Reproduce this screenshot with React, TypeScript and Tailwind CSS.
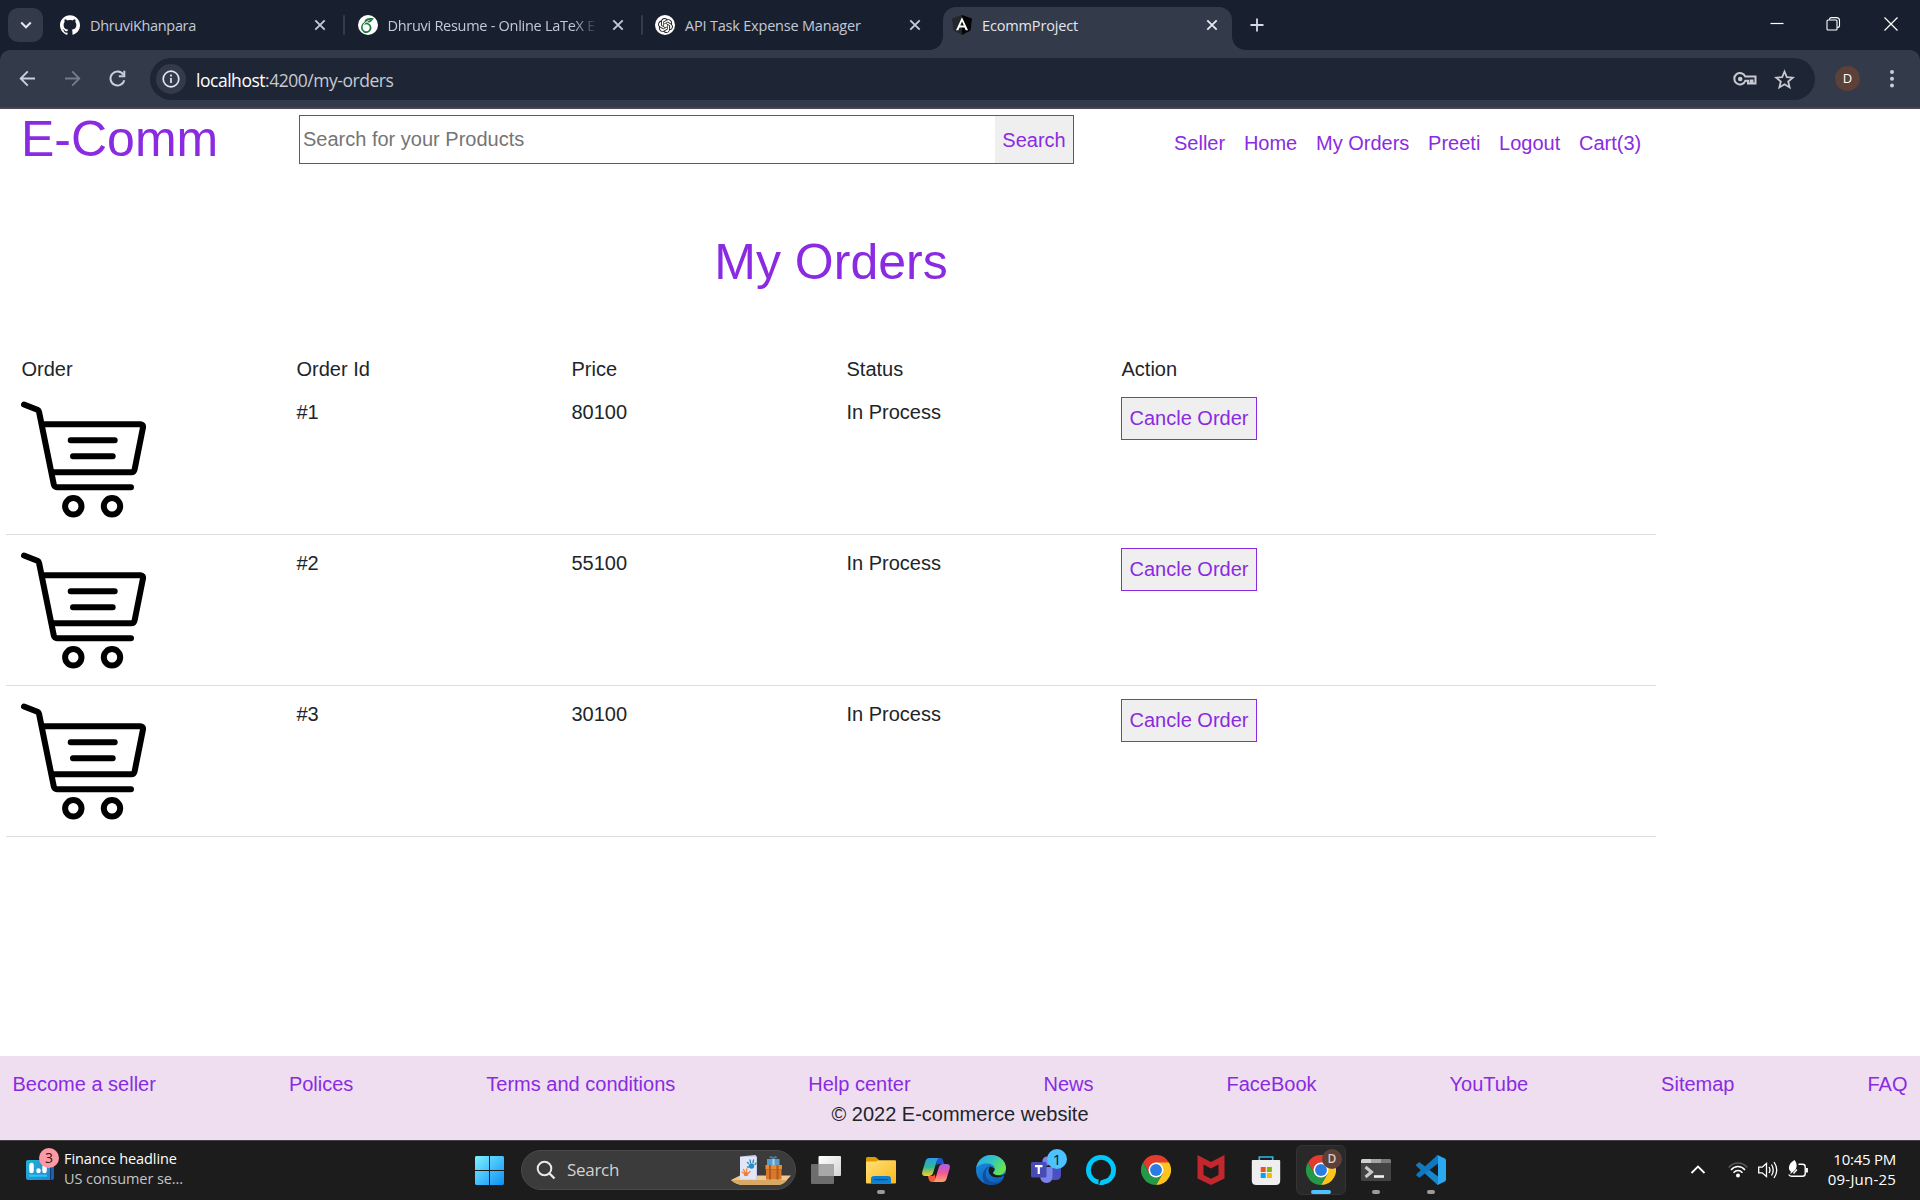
import { type ReactNode } from "react";
import { SiGithub, SiOpenai, SiOverleaf } from "react-icons/si";

const UI = "font-['Open_Sans','Noto_Sans',sans-serif]";

function CloseX({ className = "text-[#c3c9d6]" }: { className?: string }) {
  return (
    <svg className={"size-5 shrink-0 " + className} viewBox="0 0 20 20" fill="none" stroke="currentColor" strokeWidth="1.9">
      <path d="M5.3 5.3l9.4 9.4M14.7 5.3l-9.4 9.4" />
    </svg>
  );
}

function AngularShield() {
  return (
    <svg className="size-5 shrink-0" viewBox="0 0 20 20">
      <path d="M10 0L0 3.4l1.5 12L10 20z" fill="#23272b" />
      <path d="M10 0l10 3.4-1.5 12L10 20z" fill="#030405" />
      <path d="M10 2.2L4 15.3h2.300l1.200-2.900h5l1.200 2.900h2.300zM10 6.400l1.800 4.200H8.200z" fill="#fff" fillRule="evenodd" />
    </svg>
  );
}

type TabProps = { icon: ReactNode; title: string; titleClass?: string };

function Tab({ icon, title, titleClass = "" }: TabProps) {
  return (
    <div className="flex h-9 w-[297.5px] shrink-0 items-center">
      {icon}
      <div className={"ml-[10px] w-[210px] whitespace-nowrap pt-px text-[14.5px] leading-5 text-[#c3c9d6] " + titleClass}>
        {title}
      </div>
      <div className="ml-[10px] flex">
        <CloseX />
      </div>
      <div className="ml-[13px] h-5 w-[2px] rounded bg-[#343b4c]" />
    </div>
  );
}

function TabStrip() {
  return (
    <div className="flex h-[50px] shrink-0 bg-[#18202f]">
      <div className="mt-2 flex h-[34px] w-[35px] ml-2 items-center justify-center rounded-[10px] bg-[#333a4a]">
        <svg className="size-5" viewBox="0 0 20 20" fill="none" stroke="#e3e6ee" strokeWidth="2">
          <path d="M5.2 7.5l4.8 4.8 4.8-4.8" />
        </svg>
      </div>
      <div className="ml-[17px] flex w-[883px] overflow-hidden pt-[7px]">
        <Tab icon={<SiGithub className="size-5 shrink-0 text-white" />} title="DhruviKhanpara" titleClass="tracking-[-0.35px]" />
        <Tab
          icon={
            <div className="flex size-5 shrink-0 items-center justify-center rounded-full bg-white">
              <SiOverleaf className="size-[15px] text-[#1b7a3e]" />
            </div>
          }
          title="Dhruvi Resume - Online LaTeX E"
          titleClass="tracking-[-0.28px] [mask-image:linear-gradient(90deg,#000_88%,transparent)]"
        />
        <div className="w-[280px] overflow-hidden">
          <Tab
            icon={
              <div className="flex size-5 shrink-0 items-center justify-center rounded-full bg-white">
                <SiOpenai className="size-[15px] text-[#222]" />
              </div>
            }
            title="API Task Expense Manager"
            titleClass="tracking-[-0.2px]"
          />
        </div>
      </div>
      <div className="relative mt-[7px] flex h-[43px] w-[289px] shrink-0 items-center rounded-t-[13px] bg-[#333a4a] pb-[7px] pl-[9px]">
        <div className="absolute bottom-0 -left-[13px] size-[13px] bg-[radial-gradient(circle_at_0_0,transparent_12.5px,#333a4a_13px)]" />
        <div className="absolute -right-[13px] bottom-0 size-[13px] bg-[radial-gradient(circle_at_100%_0,transparent_12.5px,#333a4a_13px)]" />
        <AngularShield />
        <div className="ml-[10px] w-[210px] pt-px text-[14.5px] leading-5 tracking-[-0.15px] text-[#e3e6ee]">EcommProject</div>
        <div className="ml-[10px] flex">
          <CloseX className="text-[#e3e6ee]" />
        </div>
      </div>
      <svg className="mt-[15px] ml-[15px] size-5 shrink-0" viewBox="0 0 20 20" stroke="#d5d9e3" strokeWidth="1.8">
        <path d="M10 3.5v13M3.5 10h13" />
      </svg>
      <div className="ml-auto flex items-center gap-[42px] pr-[21px] pb-[2px]">
        <svg className="-mr-[2px] size-4" viewBox="0 0 16 16" stroke="#fff" strokeWidth="1.2">
          <path d="M1.500 7.500h13" />
        </svg>
        <svg className="size-4" viewBox="0 0 16 16" fill="none" stroke="#fff" strokeWidth="1.1">
          <rect x="2" y="4" width="10" height="10" rx="1" />
          <path d="M4.500 3.800c0-1.200.8-2.200 2-2.200h5c1.700 0 3 1.300 3 3v5c0 1.200-1 2-2.200 2" />
        </svg>
        <svg className="size-4" viewBox="0 0 16 16" stroke="#fff" strokeWidth="1.2">
          <path d="M1.500 1.500l13 13M14.500 1.500l-13 13" />
        </svg>
      </div>
    </div>
  );
}

function Toolbar() {
  return (
    <div className="h-[59px] shrink-0 bg-[#18202f]">
      <div className="flex h-[59px] rounded-t-[10px] border-b-2 border-[#474652] bg-[#333a4a] pt-2 pl-[17px]">
        <div className="flex h-10 w-[133px] items-center gap-[24px]">
          <svg className="size-[21px]" viewBox="0 0 21 21" fill="none" stroke="#c8cedb" strokeWidth="1.9">
            <path d="M18 10.500H4M10.800 3.400L3.700 10.500l7.100 7.100" />
          </svg>
          <svg className="size-[21px]" viewBox="0 0 21 21" fill="none" stroke="#747b8b" strokeWidth="1.9">
            <path d="M3 10.500h14M10.200 3.400l7.100 7.100-7.100 7.100" />
          </svg>
          <svg className="size-[21px]" viewBox="0 0 21 21" fill="none" stroke="#c8cedb" strokeWidth="2">
            <path d="M16.300 6.600a7 7 0 1 0 1 5.600" />
            <path d="M17.300 2.800v5.500h-5.500" />
          </svg>
        </div>
        <div className="flex h-[42px] w-[1665px] items-center rounded-full bg-[#1e2636] pr-5 pl-[6px]">
          <div className="flex size-[30px] items-center justify-center rounded-full bg-[#333a4a]">
            <svg className="size-5" viewBox="0 0 20 20" fill="none" stroke="#e3e6ee" strokeWidth="1.7">
              <circle cx="10" cy="10" r="7.8" />
              <path d="M10 9v5M10 5.600v2" />
            </svg>
          </div>
          <div className="ml-[10px] pt-px text-[17.5px] leading-6 tracking-[-0.47px] text-[#c8cad0]">
            <span className="text-white">localhost</span>:4200/my-orders
          </div>
          <svg className="ml-auto h-[18px] w-6" viewBox="0 0 24 18" fill="none" stroke="#c8cad0" strokeWidth="2">
            <path d="M12.300 6.600H22.500v7h-3v-3h-1.900v3h-2.600v-2.800h-2.700A5.700 5.700 0 1 1 12.300 6.600z" />
            <circle cx="7.200" cy="9" r="2.300" fill="#c8cad0" stroke="none" />
          </svg>
          <svg className="ml-[17px] size-[21px]" viewBox="0 0 21 21" fill="none" stroke="#c8cad0" strokeWidth="1.8">
            <path d="M10.500 2.500l2.300 5.600 6 .5-4.600 3.900 1.400 5.900-5.100-3.100-5.100 3.100 1.400-5.900L2.200 8.600l6-.5z" />
          </svg>
        </div>
        <div className="mt-2 ml-5 flex size-[25px] items-center justify-center rounded-full bg-[#5d4037] text-[13px] text-white">D</div>
        <svg className="mt-[9px] ml-[26px] h-6 w-[12px]" viewBox="0 0 12 24" fill="#c8cedb">
          <circle cx="6" cy="5" r="2" />
          <circle cx="6" cy="11.700" r="2" />
          <circle cx="6" cy="18.500" r="2" />
        </svg>
      </div>
    </div>
  );
}

const NAV = ["Seller", "Home", "My Orders", "Preeti", "Logout", "Cart(3)"];

function SiteHeader() {
  return (
    <header className="flex h-[60px] text-[#8a2be2]">
      <h1 className="w-[299px] pl-[21px] text-[50px] leading-[60px]">E-Comm</h1>
      <div className="mt-[6px] flex h-[49px] w-[775px] border border-[#8a2be2]">
        <div className="flex-1 pl-[3px] text-[20px] leading-[46px] text-[#757575]">Search for your Products</div>
        <button className="w-[78px] bg-[#efefef] text-[20px] leading-[30px]">Search</button>
      </div>
      <nav className="ml-[100px] flex gap-[18.75px] pt-[19px] text-[20px] leading-[30px]">
        {NAV.map((n) => (
          <a key={n}>{n}</a>
        ))}
      </nav>
    </header>
  );
}

function CartPicture() {
  return (
    <svg className="size-[125px]" viewBox="0 0 125 125" fill="none" stroke="#000" strokeWidth="6" strokeLinecap="round" strokeLinejoin="round">
      <path d="M3 7.500l13.400 5.300q1.400.700 1.700 2.300L32.800 87.500q.600 2.700 3.200 2.700H110" />
      <path d="M22 27.300H119.600q2.800.300 2.400 3L113.600 72.500q-.600 2.800-3.300 2.800H32" />
      <path d="M49.700 43.300h44M52 59.300h39.700" />
      <circle cx="52.300" cy="109.300" r="8.200" />
      <circle cx="91" cy="109.300" r="8.200" />
    </svg>
  );
}

const ORDERS = [
  { id: "#1", price: "80100", status: "In Process" },
  { id: "#2", price: "55100", status: "In Process" },
  { id: "#3", price: "30100", status: "In Process" },
];

function Orders() {
  return (
    <main className="ml-[6px] w-[1650px] text-[20px] leading-[30px] text-[#212529]">
      <h1 className="pt-[63px] text-center text-[50px] leading-[60px] text-[#8a2be2]">My Orders</h1>
      <div className="mt-[62px] grid grid-cols-6">
        {["Order", "Order Id", "Price", "Status", "Action"].map((h) => (
          <div key={h} className="pl-[15.5px]">{h}</div>
        ))}
      </div>
      {ORDERS.map((o) => (
        <div key={o.id} className="grid h-[151px] grid-cols-6 border-b border-[#dcdddf] pt-[13px]">
          <div className="pl-[15px]">
            <CartPicture />
          </div>
          <div className="pl-[15.5px]">{o.id}</div>
          <div className="pl-[15.5px]">{o.price}</div>
          <div className="pl-[15.5px]">{o.status}</div>
          <div className="pl-[15px]">
            <button className="h-[43px] w-[136px] whitespace-nowrap border border-[#8a2be2] bg-[#efefef] pb-[2px] text-[#8a2be2]">Cancle Order</button>
          </div>
        </div>
      ))}
    </main>
  );
}

const LINKS = ["Become a seller", "Polices", "Terms and conditions", "Help center", "News", "FaceBook", "YouTube", "Sitemap", "FAQ"];

function SiteFooter() {
  return (
    <footer className="mt-auto h-[84px] shrink-0 bg-[#efdef0] px-[12.5px] pt-[13px] text-[20px] leading-[30px]">
      <div className="flex justify-between text-[#8a2be2]">
        {LINKS.map((l) => (
          <a key={l}>{l}</a>
        ))}
      </div>
      <p className="text-center text-[#212529]">© 2022 E-commerce website</p>
    </footer>
  );
}

function ChromeLogo() {
  return (
    <svg className="size-[30px]" viewBox="0 0 48 48">
      <path d="M24 24L3.200 12A24 24 0 0 1 44.800 12z" fill="#e33b2e" />
      <path d="M24 12h20.800A24 24 0 0 1 24 48L34.400 30z" fill="#fdc51b" />
      <path d="M3.200 12l10.400 18L24 24V12z" fill="#e33b2e" />
      <path d="M3.200 12A24 24 0 0 0 24 48l10.400-18H13.600z" fill="#249a48" />
      <circle cx="24" cy="24" r="12" fill="#fff" />
      <circle cx="24" cy="24" r="9.500" fill="#2c7be5" />
    </svg>
  );
}

function FolderIcon() {
  return (
    <svg className="size-[30px]" viewBox="0 0 30 30">
      <defs>
        <linearGradient id="fold" x1="0" y1="0" x2="1" y2="1">
          <stop offset="0" stopColor="#ffe07a" />
          <stop offset="1" stopColor="#fcb919" />
        </linearGradient>
      </defs>
      <path d="M0 3.500Q0 2 1.500 2h7.200q1.200 0 2 .900L13 5v6H0z" fill="#dd9b00" />
      <path d="M0 7.500q0-1 1-1h9l2.500-1.300H29q1 0 1 1v21.300q0 .900-1 .900H1q-1 0-1-.900z" fill="url(#fold)" />
      <path d="M5 28.400V24q0-3 3-3h14q3 0 3 3v4.400z" fill="#0f7fd0" />
      <path d="M8.500 24.600h13" stroke="#07508c" strokeWidth="1.200" />
    </svg>
  );
}

function CopilotIcon() {
  return (
    <svg className="size-[30px]" viewBox="0 0 30 30">
      <defs>
        <linearGradient id="cpA" x1="0" y1="0" x2="0" y2="1">
          <stop offset="0" stopColor="#2a9df0" />
          <stop offset=".5" stopColor="#2fb894" />
          <stop offset="1" stopColor="#ffcf22" />
        </linearGradient>
        <linearGradient id="cpB" x1="0" y1="0" x2="0" y2="1">
          <stop offset="0" stopColor="#a260e8" />
          <stop offset=".5" stopColor="#f2589a" />
          <stop offset="1" stopColor="#ffa65c" />
        </linearGradient>
      </defs>
      <path d="M15 3h4.300q2 0 2.700 2l1.300 4h-5q-2 0-2.600 2z" fill="#1c55c8" />
      <path d="M15 27h-4.300q-2 0-2.700-2l-1.200-4h4.500q2 0 2.600-2z" fill="#ee5b37" />
      <path d="M8.500 3H18q-1.500.500-2 2.300l-4 13q-.900 2.700-3.500 2.700H4.200Q.5 21 1.200 17L4.500 6Q5.500 3 8.500 3z" fill="url(#cpA)" />
      <path d="M21.500 27H12q1.500-.500 2-2.300l4-13Q18.900 9 21.500 9h4.300q3.700 0 3 4l-3.300 11q-1 3-4 3z" fill="url(#cpB)" />
    </svg>
  );
}

function EdgeIcon() {
  return (
    <svg className="size-[30px]" viewBox="0 0 30 30">
      <defs>
        <linearGradient id="edA" x1="0" y1="0" x2="1" y2=".5">
          <stop offset="0" stopColor="#2aa9e6" />
          <stop offset=".5" stopColor="#2fc2c8" />
          <stop offset="1" stopColor="#66e450" />
        </linearGradient>
        <linearGradient id="edB" x1="0" y1="0" x2=".6" y2="1">
          <stop offset="0" stopColor="#1d8fe0" />
          <stop offset="1" stopColor="#0b62bd" />
        </linearGradient>
      </defs>
      <circle cx="15" cy="15" r="15" fill="url(#edB)" />
      <path d="M14 11c-5 3-5.500 9-2.500 13 4 5 11 4 16 .500C23 30.500 15 31.500 9 28 4 21 8 12 14 11z" fill="#104f9c" />
      <path d="M.2 13C1.500 5 8 0 15 0c8.500 0 15 6 15 13 0 4.500-3.500 7.200-8 7.200-3 0-5.300-1-5-2.200.2-.700 1.700-1.500 1.700-4C18.700 11 16 8.500 11 8.500 6 8.500 2 10.500.2 13z" fill="url(#edA)" />
      <path d="M14.500 11.500c-3 1.500-2.500 7 1.200 9.500 4 2.500 8.500 1.300 11.600-.200q.7-.200.7.500l-.5 2.200 3-.500V18.500q-4 3-9.500 1.700c-3-.700-4.300-1.500-4-2.700.4-1 1.700-1.500 1.600-4z" fill="#1c1c1c" />
    </svg>
  );
}

function TeamsIcon() {
  return (
    <svg className="size-[30px] overflow-visible" viewBox="0 0 30 30">
      <circle cx="25" cy="7.500" r="3.500" fill="#4f55c4" />
      <path d="M20 12h9q1 0 1 1v7q0 5-5 5h-4z" fill="#4a50bf" />
      <circle cx="16" cy="6" r="4.600" fill="#7b83eb" />
      <path d="M9 12h12.500v9q0 7-6 7T9 21z" fill="#7b83eb" />
      <rect x="0" y="7" width="15.500" height="15.500" rx="1.500" fill="#464cb4" />
      <path d="M4 11.200h7.500M7.750 11v8" stroke="#fff" strokeWidth="2.200" />
    </svg>
  );
}

function McAfeeIcon() {
  return (
    <svg className="size-[30px]" viewBox="0 0 30 30">
      <path d="M1.500 0L15 7l13.500-7v23.500L15 30 1.500 23.500zM7.500 9.500V20L15 23.700 22.500 20V9.500L15 13.600z" fill="#c1272d" fillRule="evenodd" />
    </svg>
  );
}

function StoreIcon() {
  return (
    <svg className="size-[30px]" viewBox="0 0 30 30">
      <path d="M8.300 7V2h13.400v5" fill="none" stroke="#31b4e9" strokeWidth="1.700" />
      <path d="M.8 6q0-.900.900-.900h26.600q.9 0 .9.900v19.500q0 4.500-4.500 4.500H5.300q-4.500 0-4.500-4.500z" fill="#efefef" />
      <path d="M9.700 12h5v5h-5z" fill="#f1511b" />
      <path d="M15.900 12h5v5h-5z" fill="#7fba00" />
      <path d="M9.700 18h5v5h-5z" fill="#00a4ef" />
      <path d="M15.900 18h5v5h-5z" fill="#fbb800" />
    </svg>
  );
}

function TerminalIcon() {
  return (
    <svg className="size-[30px]" viewBox="0 0 30 30">
      <rect x="0" y="4" width="30" height="22" rx="1.500" fill="#434343" />
      <path d="M0 8V5.500Q0 4 1.500 4H10v4z" fill="#cfcfcf" />
      <path d="M10 4h10v4H10z" fill="#a5a5a5" />
      <path d="M20 4h8.500q1.500 0 1.500 1.500V8H20z" fill="#7b7b7b" />
      <path d="M4.500 12l6 5-6 5" fill="none" stroke="#c9c9c9" strokeWidth="3" />
      <path d="M13 21.500h10" stroke="#f2f2f2" strokeWidth="2.600" />
    </svg>
  );
}

function VsCodeIcon() {
  return (
    <svg className="size-[30px]" viewBox="0 0 30 30">
      <path d="M.5 9.600L2.600 7.700q.7-.500 1.400 0L22 21.500v7.800q-.5.500-1.500-.300L.6 11q-.6-.7-.1-1.400z" fill="#1587cf" />
      <path d="M.5 20.400l2.100 1.900q.7.500 1.400 0L22 8.500V.7q-.5-.500-1.500.300L.6 19q-.6.700-.1 1.400z" fill="#0f78c0" />
      <path d="M.5 9.600L2.600 7.700q.7-.500 1.400 0L13 14.700 8.800 18.500.6 11q-.6-.7-.1-1.400z" fill="#1478bd" />
      <path d="M22 .3l6.900 3.200Q30 4 30 5.300v19.400q0 1.300-1.100 1.800L22 29.700q-1 .300-1.700-.700 1.700.700 1.700-1V2q0-1.700-1.700-1Q21 0 22 .3z" fill="#2aa8f2" />
    </svg>
  );
}

function TaskView() {
  return (
    <svg className="size-[30px]" viewBox="0 0 30 30">
      <defs>
        <linearGradient id="tv" x1="0" y1="0" x2="1" y2="1">
          <stop offset="0" stopColor="#fff" />
          <stop offset="1" stopColor="#d4d4d4" />
        </linearGradient>
      </defs>
      <rect x="7.500" y="1" width="22.500" height="20" rx="1" fill="url(#tv)" />
      <rect x="0" y="9" width="23" height="20" rx="1" fill="#6d6d6d" />
      <path d="M7.500 9H23v12H7.500z" fill="#a8a8a8" />
    </svg>
  );
}

function AlexaIcon() {
  return (
    <svg className="size-[30px]" viewBox="0 0 30 30">
      <circle cx="15" cy="15" r="15" fill="#00c8fa" />
      <circle cx="15" cy="15" r="10.200" fill="#1c1c1c" />
      <path d="M12.500 25L17 24.600 13 30h-.5z" fill="#1c1c1c" />
      <path d="M13.300 30q-.2-2.500 1.700-4.800 3-.1 5-1.500l1 4.500q-4 2-7.700 1.800z" fill="#00c8fa" />
    </svg>
  );
}

function Badge({ children, className }: { children: ReactNode; className: string }) {
  return <div className={"absolute flex size-5 items-center justify-center rounded-full leading-none " + className}>{children}</div>;
}

function TaskbarItem({ children, mark, active }: { children: ReactNode; mark?: boolean; active?: boolean }) {
  return (
    <div className={"relative flex size-[50px] shrink-0 items-center justify-center rounded-md " + (active ? "border border-[#343434] bg-[#292929]" : "")}>
      {children}
      {mark && <div className="absolute bottom-[1px] left-[21px] h-1 w-2 rounded-full bg-[#9a9a9a]" />}
      {active && <div className="absolute bottom-0 left-[14px] h-1 w-5 rounded-full bg-[#4cc2ff]" />}
    </div>
  );
}

function SearchArt() {
  return (
    <svg className="h-[32px] w-[60px]" viewBox="0 0 60 32">
      <path d="M0 26L9 21.500h51l-6 6.500Q51 31 46 31H13Q5 31 0 26z" fill="#efc98e" />
      <path d="M0 26h56l-2 2Q51 31 46 31H13Q5 31 0 26z" fill="#d9a865" />
      <path d="M9 2.500L24.500 1 26 3v22.500H9z" fill="#c9cdee" />
      <path d="M9 3h16v22.500H9z" fill="#e3e5f7" />
      <g stroke="#2b8fc4" strokeWidth="1.400" strokeLinecap="round">
        <circle cx="20.500" cy="12" r="2" fill="#2b8fc4" />
        <path d="M17.500 9.500l-1-1M19.500 8.500l-.4-2.500M22 8.500l.6-2.500M24 10.500l1-1.500M17.500 13h-1" />
      </g>
      <g stroke="#ee8033" strokeWidth="1.300" strokeLinecap="round">
        <circle cx="15" cy="20" r="1.700" fill="#ee8033" />
        <path d="M12.500 19l-1.500-1M13.500 17.500L12.500 15.500M15.500 17l.3-2M17.500 19l1.500-1.500" />
      </g>
      <path d="M36 5h12.500v6.500H36z" fill="#5a9dcb" />
      <path d="M38 3.500q2-3 4.200 0 2.300-3 4.300 0L42.200 5z" fill="#3d83b6" />
      <path d="M34.500 11h16.500v4.500H34.500z" fill="#e98a35" />
      <path d="M35 15.500h15.500v10H35z" fill="#d9782a" />
      <path d="M38 11h2v14.500h-2zM45.500 11h2v14.500h-2z" fill="#b05a1c" />
      <path d="M41.500 5h2v6h-2z" fill="#a9d2ec" />
    </svg>
  );
}

function Taskbar() {
  return (
    <div className={"flex h-[60px] shrink-0 items-center border-t border-[#404040] bg-[#1c1c1c] pb-px text-[15px] text-white " + UI}>
      <div className="flex w-[475px] items-center pl-[26px]">
        <div className="relative h-5 w-7">
          <svg className="h-5 w-7" viewBox="0 0 28 20">
            <defs>
              <linearGradient id="wd" x1="0" y1="0" x2="1" y2="1">
                <stop offset="0" stopColor="#22b3d2" />
                <stop offset="1" stopColor="#2d7fd8" />
              </linearGradient>
            </defs>
            <rect x="10" y="0" width="18" height="20" rx="2" fill="#1662b4" />
            <rect x="0" y="0" width="25" height="20" rx="2" fill="url(#wd)" />
            <path d="M24.500 3v17" stroke="#123a66" strokeWidth="1" />
            <path d="M5.500 5v6M12.500 10.500v.5M18.500 7v4" stroke="#fff" strokeWidth="4.500" strokeLinecap="round" />
            <path d="M3 15.700h18" stroke="#19d2f0" strokeWidth="2" />
          </svg>
          <Badge className="-top-[12px] left-[13px] bg-[#ff99a4] text-[14px] text-[#222]">3</Badge>
        </div>
        <div className="-mt-[2px] ml-[10px] text-[14.5px] leading-5 tracking-[-0.08px]">
          <div>Finance headline</div>
          <div className="text-[#c4c4c4]">US consumer se...</div>
        </div>
      </div>
      <svg className="size-[29px]" viewBox="0 0 29 29">
        <defs>
          <linearGradient id="win" x1="0" y1="0" x2="29" y2="29" gradientUnits="userSpaceOnUse">
            <stop offset="0" stopColor="#7df0ff" />
            <stop offset="1" stopColor="#0c8ff5" />
          </linearGradient>
        </defs>
        <path d="M1 0h13v14H0V1zM15 0h13l1 1v13H15zM0 15h14v14H1l-1-1zM15 15h14v13l-1 1H15z" fill="url(#win)" />
      </svg>
      <div className="ml-[17px] flex h-10 w-[275px] items-center rounded-full border border-[#4a4a4a] bg-[#3b3b3b] pl-[14px]">
        <svg className="size-5" viewBox="0 0 20 20" fill="none" stroke="#e8e8e8" strokeWidth="2">
          <circle cx="8.500" cy="8.500" r="6.800" />
          <path d="M13.500 13.500l5 5" strokeWidth="2.400" />
        </svg>
        <div className="ml-[11px] text-[17px] tracking-[-0.3px] text-[#d2d2d2]">Search</div>
        <div className="ml-auto pr-[4px]">
          <SearchArt />
        </div>
      </div>
      <div className="ml-[5px] flex gap-[5px]">
        <TaskbarItem><TaskView /></TaskbarItem>
        <TaskbarItem mark><FolderIcon /></TaskbarItem>
        <TaskbarItem><CopilotIcon /></TaskbarItem>
        <TaskbarItem><EdgeIcon /></TaskbarItem>
        <TaskbarItem>
          <TeamsIcon />
          <Badge className="top-[4px] left-[26px] bg-[#4cc2ff] text-[15px] text-[#111]">1</Badge>
        </TaskbarItem>
        <TaskbarItem><AlexaIcon /></TaskbarItem>
        <TaskbarItem><ChromeLogo /></TaskbarItem>
        <TaskbarItem><McAfeeIcon /></TaskbarItem>
        <TaskbarItem><StoreIcon /></TaskbarItem>
        <TaskbarItem active>
          <ChromeLogo />
          <Badge className="top-[3px] left-[25px] bg-[#5d4037] text-[12px] font-semibold text-[#d7ccc8]">D</Badge>
        </TaskbarItem>
        <TaskbarItem mark><TerminalIcon /></TaskbarItem>
        <TaskbarItem mark><VsCodeIcon /></TaskbarItem>
      </div>
      <div className="ml-auto flex items-center pr-6">
        <svg className="size-4" viewBox="0 0 16 16" fill="none" stroke="#fff" strokeWidth="1.8">
          <path d="M1.500 11L8 4.500l6.500 6.500" />
        </svg>
        <svg className="ml-[22px] size-5" viewBox="0 0 20 20" fill="none" stroke="#fff" strokeWidth="1.5">
          <path d="M.7 7.500Q4.500 3 10 3t9.300 4.500" stroke="#5a5a5a" />
          <path d="M3 10q3-3.500 7-3.500T17 10M5.500 12.700Q7.500 10.500 10 10.500t4.500 2.200" />
          <circle cx="10" cy="15.500" r="2" fill="#fff" stroke="none" />
        </svg>
        <svg className="ml-[10px] size-5" viewBox="0 0 20 20" fill="none" stroke="#fff" strokeWidth="1.3">
          <path d="M.7 7.200h3.500L8.500 3.500v13L4.200 12.800H.7z" />
          <path d="M11 7q2 3 0 6M13.500 4.500q3.500 5.500 0 11M16 2q5.500 8 0 16" />
        </svg>
        <svg className="ml-[10px] size-5" viewBox="0 0 20 20" fill="none" stroke="#fff" strokeWidth="1.4">
          <path d="M10.500 4.200h4q2.700 0 2.700 2.500v7q0 2.500-2.700 2.500H3.500Q1.500 16.200.7 14.500" />
          <path d="M18.900 8v4.500" strokeWidth="2" />
          <path d="M6.500 0c3 3 3 9-1 11.500L2.500 14l.3-2.300C-.5 9.500.5 3 6.500 0z" fill="#fff" stroke="none" />
          <path d="M9 9.500L5.500 13.500" />
        </svg>
        <div className="-mt-[2px] w-[88px] text-right text-[15px] leading-5">
          <div className="tracking-[-0.25px]">10:45 PM</div>
          <div className="tracking-[0.2px]">09-Jun-25</div>
        </div>
      </div>
    </div>
  );
}

export default function App() {
  return (
    <div className="flex h-[1200px] w-[1920px] flex-col overflow-hidden bg-white">
      <div className={UI}>
        <TabStrip />
        <Toolbar />
      </div>
      <div className="flex flex-1 flex-col font-['Liberation_Sans',Arial,sans-serif]">
        <SiteHeader />
        <Orders />
        <SiteFooter />
      </div>
      <Taskbar />
    </div>
  );
}
